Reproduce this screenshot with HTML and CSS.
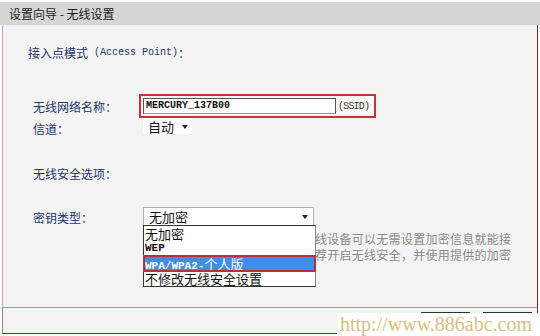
FILE: index.html
```html
<!DOCTYPE html>
<html lang="zh-CN">
<head>
    <meta charset="UTF-8">
    <title>设置向导 - 无线设置</title>
    <link rel="stylesheet" href="styles.css">
</head>
<body>
    <div class="title">设置向导 - 无线设置</div>

    <div class="panel">
        <div class="row row-head">接入点模式 <span class="mono">&nbsp;(Access Point)</span>：</div>

        <div class="row row-ssid">
            <span class="label">无线网络名称：</span>
            <span class="mark">
                <span class="text-input">MERCURY_137B00</span>
                <span class="mono ssid">(SSID)</span>
            </span>
        </div>

        <div class="row row-channel">
            <span class="label">信道：</span>
            <span class="select select-small">自动<i class="arrow"></i></span>
        </div>

        <div class="row row-sec">无线安全选项：</div>

        <div class="row row-key">
            <span class="label">密钥类型：</span>
            <span class="select select-key">
                无加密<i class="arrow"></i>
                <ul class="options">
                    <li>无加密</li>
                    <li class="mono-opt">WEP</li>
                    <li class="picked"><span class="mono-opt">WPA/WPA2-</span>个人版</li>
                    <li>不修改无线安全设置</li>
                </ul>
            </span>
        </div>

        <p class="hint">
            线设备可以无需设置加密信息就能接<br>
            荐开启无线安全，并使用提供的加密
        </p>
    </div>

    <div class="footer">
        <button class="btn" aria-label="上一步"></button>
        <button class="btn" aria-label="下一步"></button>
    </div>

    <div class="watermark">http://www.886abc.com</div>
</body>
</html>
```

FILE: styles.css
```css
body {
    margin: 0;
    width: 540px;
    height: 336px;
    overflow: hidden;
    position: relative;
    background: #fff;
    font-family: "Noto Sans CJK SC", sans-serif;
    font-size: 12px;
    color: #222;
}

.title {
    margin-top: 2px;
    height: 23px;
    line-height: 23px;
    padding-left: 9px;
    background: #d6d6d6;
    color: #1a1a1a;
}

.panel {
    box-sizing: border-box;
    width: 536px;
    height: 283px;
    margin-left: 2px;
    padding: 15px 0 0 30px;
    background: #f4f3f3;
    border-left: 1px solid #c2aaaa;
    border-right: 1px solid #6b2a2a;
    border-bottom: 1px solid #c98a8a;
}

.row {
    display: flex;
    align-items: center;
    color: #23336b;
}

.label {
    width: 110px;
}

.mono {
    font-family: "Liberation Mono", monospace;
    font-size: 10px;
}

.row-head {
    height: 20px;
    margin-top: 2px;
    margin-left: -5px;
    margin-bottom: 32px;
}

.row-ssid {
    height: 24px;
}

.mark {
    display: flex;
    align-items: center;
    box-sizing: border-box;
    height: 24px;
    margin-left: -4px;
    padding: 2px 5px 2px 2px;
    border: 2px solid #c5323c;
    background: #fbf6f6;
}

.text-input {
    box-sizing: border-box;
    width: 193px;
    height: 16px;
    line-height: 14px;
    padding-left: 2px;
    background: #fff;
    border: 1px solid #555;
    border-bottom-color: #999;
    font-family: "Liberation Mono", monospace;
    font-size: 10px;
    font-weight: bold;
    color: #111;
}

.ssid {
    margin-left: 2px;
    letter-spacing: -0.8px;
    color: #333;
}

.row-channel {
    height: 20px;
}

.select {
    position: relative;
    display: inline-flex;
    align-items: center;
    box-sizing: border-box;
    background: #fff;
    font-size: 13px;
    color: #111;
}

.select-small {
    width: 49px;
    height: 16px;
    padding-left: 5px;
    margin-top: -4px;
}

.arrow {
    position: absolute;
    right: 4px;
    top: 7px;
    border-left: 3px solid transparent;
    border-right: 3px solid transparent;
    border-top: 4px solid #222;
}

.row-sec {
    height: 20px;
    margin-top: 25px;
}

.row-key {
    height: 20px;
    margin-top: 24px;
}

.select-key {
    width: 171px;
    height: 18px;
    padding-left: 5px;
    margin-top: -2px;
    border: 1px solid #a9b0b8;
    border-bottom: none;
}

.select-key .arrow {
    right: 5px;
}

.options {
    position: absolute;
    left: -1px;
    top: 17px;
    z-index: 2;
    width: 171px;
    margin: 0;
    padding: 0;
    list-style: none;
    background: #fff;
    border: 1px solid #333;
    border-right-color: #888;
}

.options li {
    height: 15px;
    line-height: 15px;
    padding-left: 1px;
    white-space: nowrap;
}

.mono-opt {
    font-family: "Liberation Mono", monospace;
    font-size: 11px;
    font-weight: bold;
}

.options .picked {
    background: #3c8fe6;
    color: #fff;
    outline: 2px solid #b8303c;
    outline-offset: -1px;
}

.hint {
    margin: 4px 0 0 282px;
    line-height: 16px;
    white-space: nowrap;
    letter-spacing: 0.27px;
    color: #8a8a8a;
}

.footer {
    box-sizing: border-box;
    display: flex;
    justify-content: flex-end;
    gap: 13px;
    width: 536px;
    height: 26px;
    margin-left: 2px;
    padding: 4px 5px 0 0;
    background: #f4f3f3;
    border-left: 1px solid #a88080;
    border-right: 1px solid #6b2a2a;
    border-bottom: 1px solid #7a2a2a;
}

.btn {
    width: 49px;
    height: 20px;
    padding: 0;
    border: 1px solid #333;
    background: #eee;
}

.watermark {
    position: absolute;
    left: 337px;
    top: 313px;
    width: 203px;
    height: 23px;
    padding-left: 3px;
    box-sizing: border-box;
    background: #fff;
    font-family: "Liberation Serif", serif;
    font-size: 20px;
    line-height: 22px;
    color: #d8bf80;
}
```
